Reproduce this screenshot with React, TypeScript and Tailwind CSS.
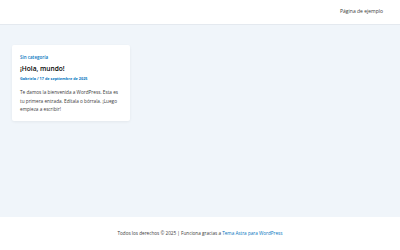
export default function App() {
  return (
    <div className="flex h-[250px] w-[400px] flex-col bg-[#f0f5fa] font-['Open_Sans',sans-serif] text-[#3a3a3a]">
      <header className="flex h-[25px] shrink-0 items-center justify-end border-b border-[#e4e9ef] bg-white pr-[17px]">
        <span className="text-[5px] text-[#3a3a3a]">Página de ejemplo</span>
      </header>
      <main className="flex-1 px-[12px] pt-[20px]">
        <article className="w-[118px] rounded-[2px] bg-white px-[8px] pb-[7px] pt-[9px] shadow-[0_1px_3px_rgba(0,0,0,0.06)]">
          <div className="text-[4.5px] font-semibold leading-[6px] text-[#0274be]">Sin categoría</div>
          <div className="mt-[4px] text-[6.6px] font-semibold leading-[9px] text-black">¡Hola, mundo!</div>
          <div className="mt-[3px] text-[3.8px] font-bold leading-[6px] text-[#0274be]">Gabriela / 17 de septiembre de 2025</div>
          <p className="mt-[6px] text-[4.7px] leading-[8.5px] text-[#3a3a3a]">
            Te damos la bienvenida a WordPress. Esta es tu primera entrada. Edítala o bórrala. ¡Luego empieza a escribir!
          </p>
        </article>
      </main>
      <footer className="flex h-[33px] shrink-0 items-center justify-center bg-white">
        <span className="text-[4.65px] text-[#3a3a3a]">
          Todos los derechos © 2025 | Funciona gracias a <span className="text-[#0274be]">Tema Astra para WordPress</span>
        </span>
      </footer>
    </div>
  );
}
